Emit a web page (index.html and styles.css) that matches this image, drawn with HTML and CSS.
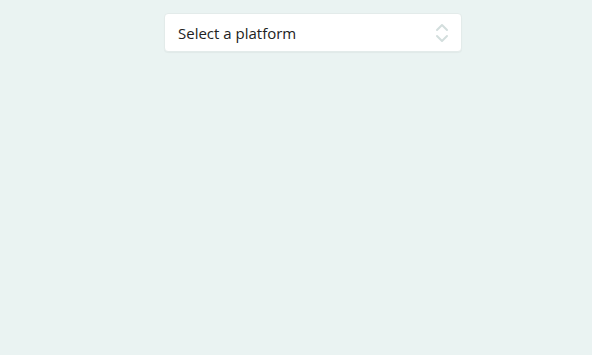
FILE: index.html
```html
<!DOCTYPE html>
<html lang="en">
<head>
  <meta charset="UTF-8" />
  <title>Platform picker</title>
  <link rel="stylesheet" href="styles.css">
</head>
<body>
  <div class="page">
    <div class="select-box">
      <span class="placeholder">Select a platform</span>
      <svg class="chevrons" width="14" height="22" viewBox="0 0 14 22">
        <path d="M2 8 L7 3 L12 8" fill="none" stroke="#d3dedd" stroke-width="2" stroke-linecap="round" stroke-linejoin="round"/>
        <path d="M2 14 L7 19 L12 14" fill="none" stroke="#d3dedd" stroke-width="2" stroke-linecap="round" stroke-linejoin="round"/>
      </svg>
    </div>
  </div>
</body>
</html>
```

FILE: styles.css
```css
body {
  margin: 0;
  font-family: "Open Sans", "Noto Sans", sans-serif;
  background-color: #eaf3f2;
  color: #222;
  min-height: 100vh;
}

.page {
  padding: 13px 0 0 164px;
}

.select-box {
  width: 298px;
  height: 39px;
  box-sizing: border-box;
  background-color: #fff;
  border: 1px solid #e3ebea;
  border-radius: 4px;
  box-shadow: 0 1px 1px rgba(0, 0, 0, 0.04);
  display: flex;
  align-items: center;
  justify-content: space-between;
  padding: 0 12px 0 13px;
}

.placeholder {
  font-size: 15px;
  color: #222;
}

.chevrons {
  display: block;
}
```
